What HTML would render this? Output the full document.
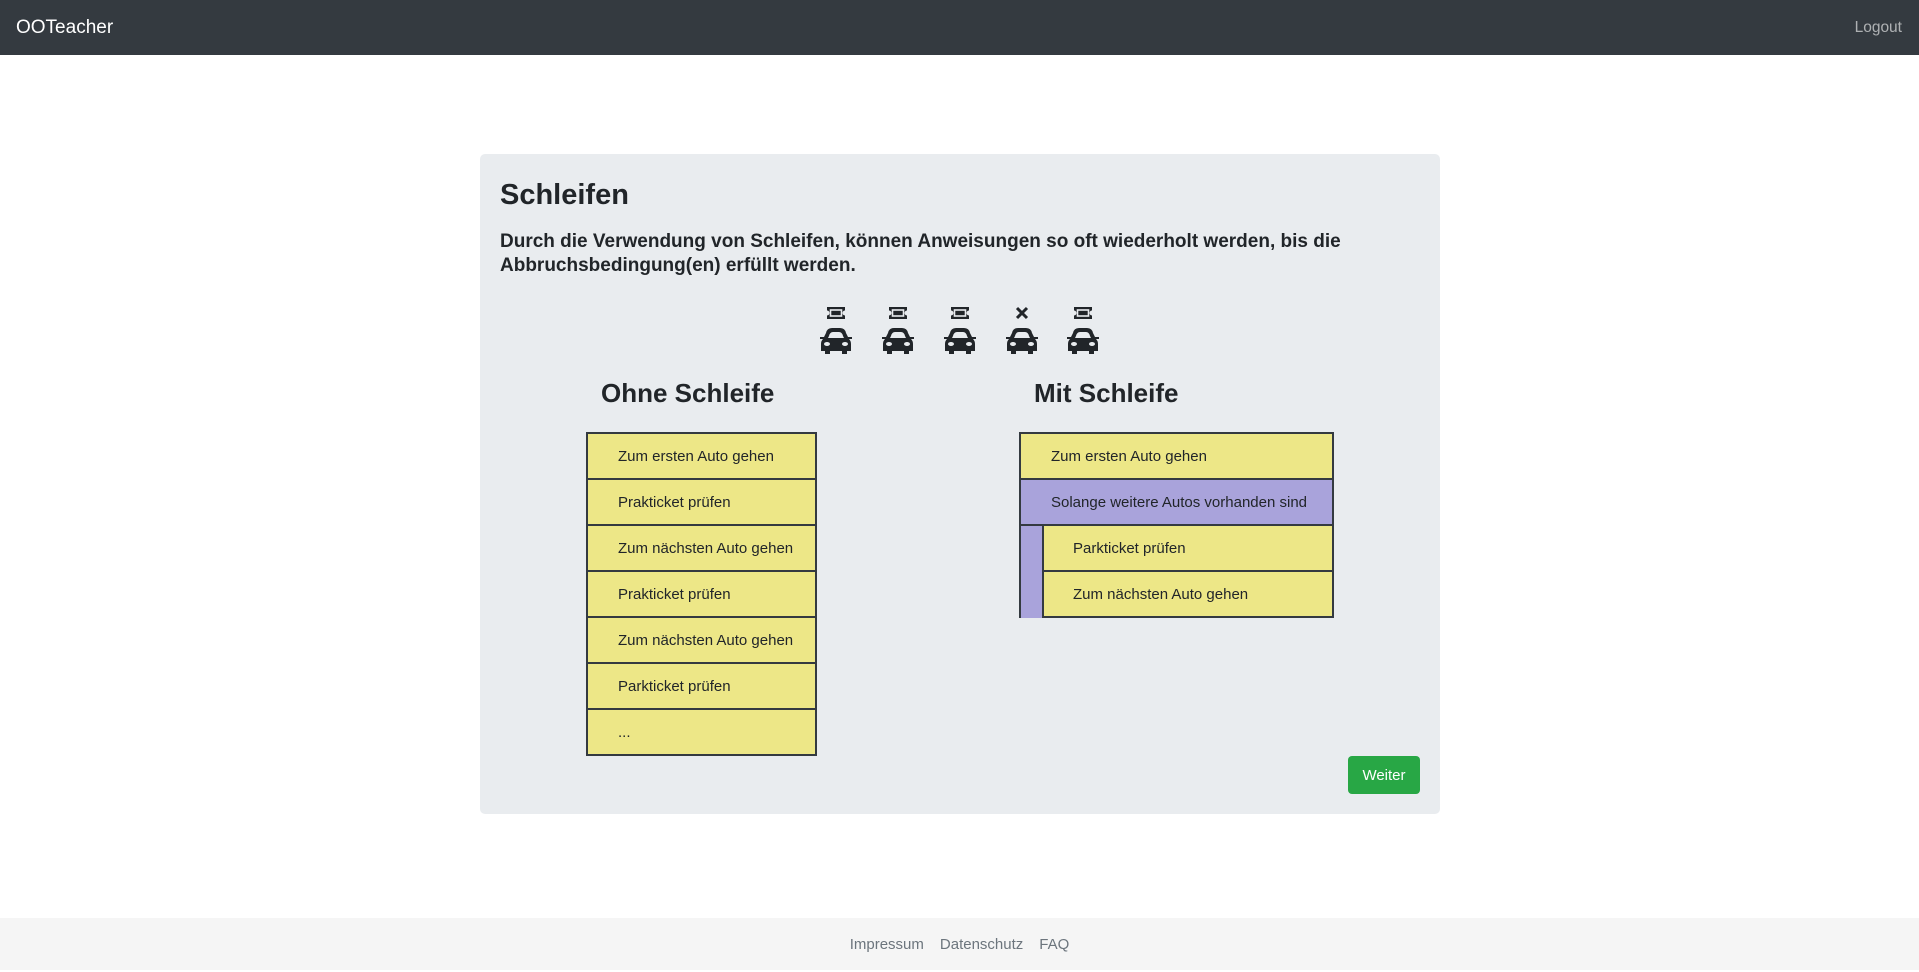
<!DOCTYPE html>
<html><head><meta charset="utf-8"><style>
*{box-sizing:border-box;margin:0;padding:0}
body{width:1919px;height:970px;position:relative;background:#fff;font-family:"Liberation Sans",sans-serif;color:#212529;overflow:hidden}
.nav{position:absolute;left:0;top:0;width:1919px;height:55px;background:#343a40}
.brand{position:absolute;left:16px;top:17px;font-size:19px;color:#fff}
.logout{position:absolute;right:17px;top:19px;font-size:15.5px;color:rgba(255,255,255,.6)}
.card{position:absolute;left:480px;top:154px;width:960px;height:660px;background:#e9ecef;border-radius:5px}
h1{position:absolute;left:500px;top:179px;font-size:29px;font-weight:bold}
.lead{position:absolute;left:500px;top:230px;width:880px;font-size:19px;font-weight:600;line-height:24px}
h2{position:absolute;font-size:26px;font-weight:bold;top:378px}
.tbl{position:absolute;border:2px solid #343a40;border-bottom:0}
.row{height:46px;border-bottom:2px solid #343a40;background:#ede787;font-size:15px;line-height:46px;padding-left:30px;white-space:nowrap}
.loop{background:#a9a3db}
.inner{margin-left:21px;border-left:2px solid #343a40}
.btn{position:absolute;left:1348px;top:756px;width:72px;height:38px;background:#28a745;color:#fff;border-radius:4px;font-size:15px;text-align:center;line-height:39px}
.foot{position:absolute;left:0;top:918px;width:1919px;height:52px;background:#f5f5f5;text-align:center;font-size:15px;color:#6c757d;line-height:54px}
.foot span{margin:0 8px}
.ic{position:absolute}
</style></head><body>
<div class="nav"><div class="brand">OOTeacher</div><div class="logout">Logout</div></div>
<div class="card"></div>
<h1>Schleifen</h1>
<div class="lead">Durch die Verwendung von Schleifen, können Anweisungen so oft wiederholt werden, bis die Abbruchsbedingung(en) erfüllt werden.</div>

<svg class="ic" style="left:800px;top:300px" width="320" height="60" viewBox="0 0 320 60">
<defs>
<g id="t"><rect x="-9" y="-6" width="18" height="12" fill="#212529"/><circle cx="-9" cy="0" r="2.5" fill="#e9ecef"/><circle cx="9" cy="0" r="2.5" fill="#e9ecef"/><rect x="-5.5" y="-3" width="11" height="6" fill="none" stroke="#e9ecef" stroke-width="1.6"/></g>
<g id="c"><path d="M-10,-9q1,-5 6,-5h8q5,0 6,5l2,4h4v2h-3q2,2 2,5v7h-4v3h-5v-3h-12v3h-5v-3h-4v-7q0,-3 2,-5h-3v-2h4z" fill="#212529"/><path d="M-7,-6q1,-4 4,-4h6q3,0 4,4l1,2h-16z" fill="#e9ecef"/><ellipse cx="-9" cy="2" rx="3" ry="2" fill="#e9ecef"/><ellipse cx="9" cy="2" rx="3" ry="2" fill="#e9ecef"/></g>
</defs>
<use href="#t" x="36" y="13"/><use href="#c" x="36" y="42"/>
<use href="#t" x="98" y="13"/><use href="#c" x="98" y="42"/>
<use href="#t" x="160" y="13"/><use href="#c" x="160" y="42"/>
<path d="M217,8l10,10M227,8l-10,10" stroke="#212529" stroke-width="3"/><use href="#c" x="222" y="42"/>
<use href="#t" x="283" y="13"/><use href="#c" x="283" y="42"/>
</svg>

<h2 style="left:601px">Ohne Schleife</h2>
<h2 style="left:1034px">Mit Schleife</h2>
<div class="tbl" style="left:586px;top:432px;width:231px">
<div class="row">Zum ersten Auto gehen</div>
<div class="row">Prakticket prüfen</div>
<div class="row">Zum nächsten Auto gehen</div>
<div class="row">Prakticket prüfen</div>
<div class="row">Zum nächsten Auto gehen</div>
<div class="row">Parkticket prüfen</div>
<div class="row">...</div>
</div>
<div class="tbl" style="left:1019px;top:432px;width:315px">
<div class="row">Zum ersten Auto gehen</div>
<div class="loop"><div class="row" style="background:none">Solange weitere Autos vorhanden sind</div>
<div class="row inner" style="padding-left:29px">Parkticket prüfen</div>
<div class="row inner" style="padding-left:29px">Zum nächsten Auto gehen</div></div>
</div>
<div class="btn">Weiter</div>
<div class="foot"><span>Impressum</span><span>Datenschutz</span><span>FAQ</span></div>
</body></html>
